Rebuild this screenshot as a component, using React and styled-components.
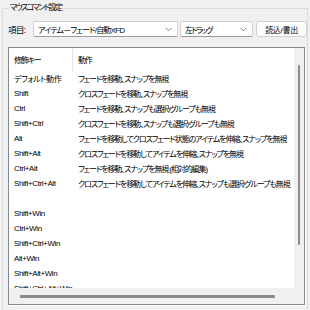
import React from "react";
import styled, { createGlobalStyle } from "styled-components";

const Global = createGlobalStyle`
  html, body { margin: 0; padding: 0; }
  body {
    width: 310px; height: 310px; overflow: hidden;
    background: #f0f0f0;
    font-family: "Liberation Sans", "Noto Sans CJK JP", sans-serif;
    font-size: 8px;
    color: #000;
    font-feature-settings: "palt";
    letter-spacing: -0.6px;
  }
`;

const Group = styled.fieldset`
  margin: 2px 2px 0 2px;
  padding: 7px 2px 0 5px;
  border: 1px solid #dcdcdc;
  border-radius: 0;
  height: 320px;
  box-sizing: border-box;
  min-width: 0;
`;

const Legend = styled.legend`
  padding: 0 1px;
  margin-left: 1px;
  line-height: 12px;
  letter-spacing: -1.6px;
  color: #000;
`;

const TopRow = styled.div`
  display: flex;
  align-items: center;
  height: 16px;
`;

const Label = styled.span`
  width: 25px;
  flex: none;
  font-size: 8.5px;
`;

const Combo = styled.div`
  box-sizing: border-box;
  width: ${(p) => p.$w}px;
  height: 16px;
  margin-right: ${(p) => p.$mr}px;
  flex: none;
  background: #fff;
  border: 1px solid #d0d0d0;
  border-bottom-color: #9a9a9a;
  border-radius: 2px;
  display: flex;
  align-items: center;
  padding: 0 5px 0 4px;
`;

const ComboText = styled.span`
  flex: 1;
  white-space: nowrap;
  overflow: hidden;
  letter-spacing: ${(p) => p.$ls}px;
`;

const Chevron = styled.svg`
  flex: none;
  width: 7px;
  height: 5px;
`;

const Button = styled.div`
  box-sizing: border-box;
  width: 51px;
  height: 16px;
  flex: none;
  background: #fdfdfd;
  border: 1px solid #d0d0d0;
  border-radius: 3px;
  display: flex;
  align-items: center;
  justify-content: center;
  letter-spacing: -0.3px;
`;

const List = styled.div`
  margin-top: 10px;
  box-sizing: border-box;
  width: 297px;
  height: 258px;
  border: 1px solid #828790;
  box-shadow: 1px 1px 0 #ffffff;
  display: grid;
  grid-template-columns: 1fr 10px;
  grid-template-rows: 1fr 16px;
`;

const Content = styled.div`
  background: #fff;
  overflow: hidden;
`;

const Header = styled.div`
  display: flex;
  height: 23px;
  align-items: center;
`;

const HeadCell = styled.div`
  box-sizing: border-box;
  width: ${(p) => (p.$w ? p.$w + "px" : "auto")};
  flex: ${(p) => (p.$w ? "none" : "1")};
  height: 100%;
  display: flex;
  align-items: center;
  padding-left: 5px;
  letter-spacing: -1.2px;
  border-right: ${(p) => (p.$sep ? "1px solid #e5e5e5" : "none")};
`;

const Row = styled.div`
  display: flex;
  height: 15px;
  align-items: center;
  white-space: nowrap;
`;

const Cell = styled.div`
  box-sizing: border-box;
  width: ${(p) => (p.$w ? p.$w + "px" : "auto")};
  flex: ${(p) => (p.$w ? "none" : "1")};
  padding-left: 5px;
  overflow: hidden;
  letter-spacing: ${(p) => (p.$w ? "-0.4px" : "-1.1px")};
`;

const VTrack = styled.div`
  background: #f0f0f0;
  position: relative;
`;

const VThumb = styled.div`
  position: absolute;
  left: 4px;
  top: 17px;
  width: 2px;
  height: 180px;
  border-radius: 1px;
  background: #8a8a8a;
`;

const HTrack = styled.div`
  background: #f0f0f0;
  position: relative;
`;

const HThumb = styled.div`
  position: absolute;
  left: 11px;
  top: 7px;
  width: 255px;
  height: 3px;
  border-radius: 1px;
  background: #8a8a8a;
`;

const Corner = styled.div`
  background: #f0f0f0;
`;

const rows = [
  ["デフォルト動作", "フェードを移動、スナップを無視"],
  ["Shift", "クロスフェードを移動、スナップを無視"],
  ["Ctrl", "フェードを移動、スナップも選択/グループも無視"],
  ["Shift+Ctrl", "クロスフェードを移動、スナップも選択/グループも無視"],
  ["Alt", "フェードを移動してクロスフェード状態のアイテムを伸縮、スナップを無視"],
  ["Shift+Alt", "クロスフェードを移動してアイテムを伸縮、スナップを無視"],
  ["Ctrl+Alt", "フェードを移動、スナップを無視 (相対的編集)"],
  ["Shift+Ctrl+Alt", "クロスフェードを移動してアイテムを伸縮、スナップも選択/グループも無視"],
  ["", ""],
  ["Shift+Win", ""],
  ["Ctrl+Win", ""],
  ["Shift+Ctrl+Win", ""],
  ["Alt+Win", ""],
  ["Shift+Alt+Win", ""],
  ["Shift+Ctrl+Alt+Win", ""],
  ["", ""],
];

const ChevronIcon = () => (
  <Chevron viewBox="0 0 7 5">
    <path d="M0.5 0.8 L3.5 3.8 L6.5 0.8" fill="none" stroke="#707070" strokeWidth="0.9" />
  </Chevron>
);

export default function App() {
  return (
    <>
      <Global />
      <Group>
        <Legend>マウスコマンド設定</Legend>
        <TopRow>
          <Label>項目:</Label>
          <Combo $w={145} $mr={2}>
            <ComboText $ls={-0.8}>アイテム－フェード/自動XFD</ComboText>
            <ChevronIcon />
          </Combo>
          <Combo $w={73} $mr={3}>
            <ComboText $ls={-1.6}>左ドラッグ</ComboText>
            <ChevronIcon />
          </Combo>
          <Button>読込/書出</Button>
        </TopRow>
        <List>
          <Content>
            <Header>
              <HeadCell $w={64} $sep>修飾キー</HeadCell>
              <HeadCell>動作</HeadCell>
            </Header>
            {rows.map(([k, a], i) => (
              <Row key={i}>
                <Cell $w={64}>{k}</Cell>
                <Cell>{a}</Cell>
              </Row>
            ))}
          </Content>
          <VTrack>
            <VThumb />
          </VTrack>
          <HTrack>
            <HThumb />
          </HTrack>
          <Corner />
        </List>
      </Group>
    </>
  );
}
